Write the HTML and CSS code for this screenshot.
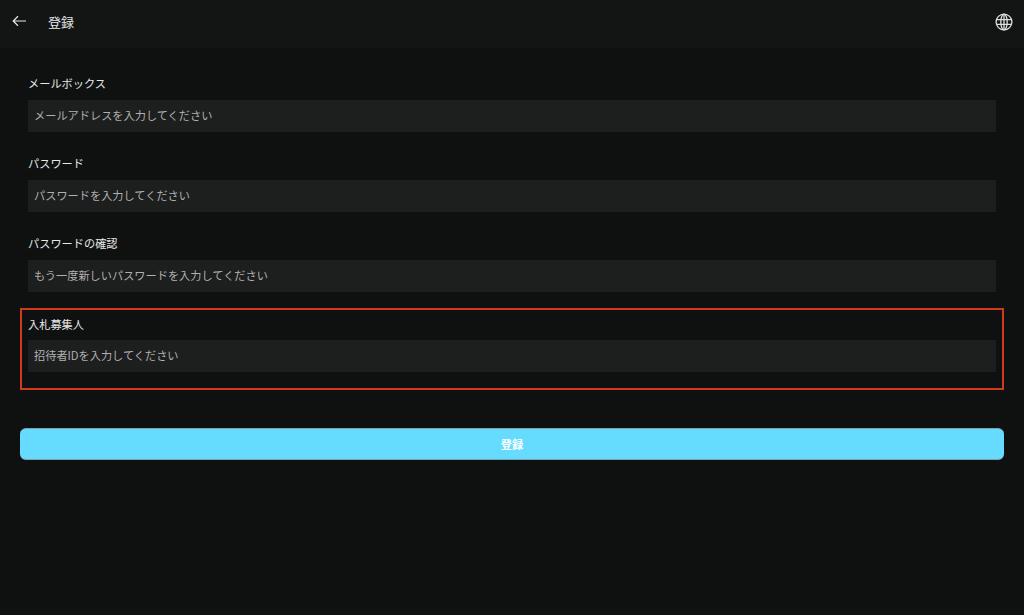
FILE: index.html
```html
<!DOCTYPE html>
<html lang="ja">
<head>
<meta charset="UTF-8">
<meta name="viewport" content="width=device-width, initial-scale=1.0">
<title>登録</title>
<link rel="stylesheet" href="styles.css">
</head>
<body>
    <div class="header">
        <div class="header-left">
            <svg class="back-icon" width="16" height="16" viewBox="0 0 16 16" fill="none" stroke="#e8e8e8" stroke-width="1.2">
                <path d="M15 8H2.2M7 3.3L2.2 8 7 12.7"/>
            </svg>
            <span class="header-title">登録</span>
        </div>
        <svg class="globe-icon" width="18" height="18" viewBox="0 0 18 18" fill="none" stroke="#dedede" stroke-width="1.3">
            <circle cx="9" cy="9" r="7.9"/>
            <ellipse cx="9" cy="9" rx="3.2" ry="7.9"/>
            <path d="M1.4 6.6h15.2M1.4 11.4h15.2M9 1.1v15.8"/>
        </svg>
    </div>

    <form class="form">
        <div class="field">
            <label class="field-label" for="email">メールボックス</label>
            <input class="field-input" id="email" type="text" placeholder="メールアドレスを入力してください">
        </div>
        <div class="field">
            <label class="field-label" for="password">パスワード</label>
            <input class="field-input" id="password" type="text" placeholder="パスワードを入力してください">
        </div>
        <div class="field">
            <label class="field-label" for="confirm">パスワードの確認</label>
            <input class="field-input" id="confirm" type="text" placeholder="もう一度新しいパスワードを入力してください">
        </div>
        <div class="field field-marked">
            <label class="field-label" for="inviter">入札募集人</label>
            <input class="field-input" id="inviter" type="text" placeholder="招待者IDを入力してください">
        </div>
        <button class="submit-button" type="button">登録</button>
    </form>
</body>
</html>
```

FILE: styles.css
```css
body {
    margin: 0;
    height: 615px;
    overflow: hidden;
    background-color: #0f1111;
    color: #e8e8e8;
    font-family: "Noto Sans CJK JP", "Liberation Sans", sans-serif;
}

.header {
    display: flex;
    justify-content: space-between;
    align-items: center;
    height: 48px;
    padding: 0 11px;
    background-color: #131515;
}

.header-left {
    display: flex;
    align-items: center;
}

.back-icon {
    margin-bottom: 6px;
}

.header-title {
    margin-bottom: 6px;
    margin-left: 21px;
    font-size: 13px;
}

.globe-icon {
    margin-bottom: 4px;
}

.form {
    display: flex;
    flex-direction: column;
    padding: 24px 20px 0;
}

.field {
    position: relative;
    display: flex;
    flex-direction: column;
    padding: 0 8px;
    margin-bottom: 20px;
}

.field-label {
    height: 24px;
    margin-bottom: 4px;
    font-size: 11.2px;
    line-height: 22px;
}

.field-marked .field-label {
    line-height: 24px;
}

.field-input {
    height: 32px;
    box-sizing: border-box;
    padding: 0 6px 2px;
    border: none;
    background-color: #1d1f1f;
    color: #e8e8e8;
    font-family: inherit;
    font-size: 11.2px;
}

.field-input::placeholder {
    color: #b0b0b0;
    opacity: 1;
}

.field-marked::after {
    content: "";
    position: absolute;
    inset: -4px 0 -18px;
    border: 2px solid #cf3a1d;
    pointer-events: none;
}

.submit-button {
    height: 32px;
    margin-top: 36px;
    border: none;
    border-top: 1px solid #7aa3b0;
    border-bottom: 1px solid #7aa3b0;
    border-radius: 6px;
    background-color: #65dcfe;
    color: #fff;
    font-family: inherit;
    font-size: 11.2px;
    font-weight: 700;
}
```
